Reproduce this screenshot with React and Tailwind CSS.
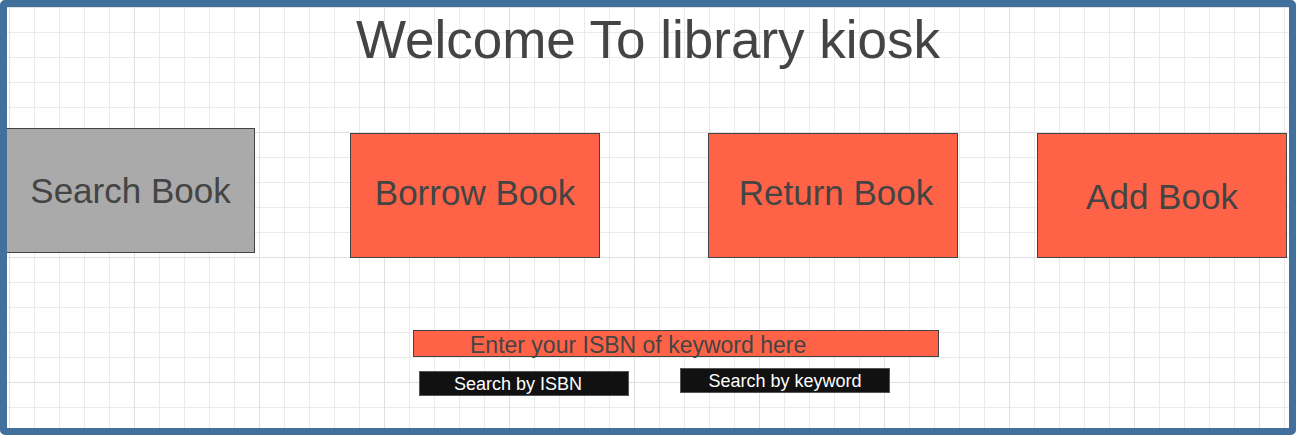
const tiles = [
  { label: 'Borrow Book', cls: 'ml-[95px] mt-[5px] pb-[6px]' },
  { label: 'Return Book', cls: 'ml-[108px] mt-[5px] pb-[7px] pl-[6px]' },
  { label: 'Add Book', cls: 'ml-[79px] mt-[5px] pt-[2px]' },
]

export default function App() {
  return (
    <div className="w-[1296px] h-[435px] bg-white font-['Liberation_Sans',Arial,sans-serif] text-[#444]">
      <div className="w-full h-full flex flex-col border-[7px] border-[#41709c] rounded-[5px] bg-white bg-[linear-gradient(to_right,#e0e0e0_1px,transparent_1px),linear-gradient(to_bottom,#e0e0e0_1px,transparent_1px),linear-gradient(to_right,#eaeaea_1px,transparent_1px),linear-gradient(to_bottom,#eaeaea_1px,transparent_1px)] bg-size-[125px_125px,125px_125px,25px_25px,25px_25px] bg-position-[2px_0,2px_0,2px_0,2px_0]">
        <h1 className="mt-[6px] text-center text-[53px] leading-[53px] font-normal">
          Welcome To library kiosk
        </h1>

        <div className="flex items-start mt-[62px]">
          <button className="w-[248px] h-[125px] flex items-center justify-center bg-[#aaaaaa] border border-[#444] border-l-0 text-[35px] leading-none">
            Search Book
          </button>
          {tiles.map((t) => (
            <button
              key={t.label}
              className={`w-[250px] h-[125px] flex items-center justify-center bg-[#ff6347] border border-[#444] text-[35px] leading-none ${t.cls}`}
            >
              {t.label}
            </button>
          ))}
        </div>

        <div className="ml-[406px] mt-[72px] w-[526px] h-[27px] bg-[#ff6347] border border-[#444] pl-[56px] pt-[2px] text-[23px] leading-[25px]">
          Enter your ISBN of keyword here
        </div>

        <div className="flex items-start ml-[412px] mt-[11px]">
          <button className="mt-[3px] w-[210px] h-[25px] flex items-center justify-center pr-[12px] bg-[#111] border border-[#555] text-white text-[18px] leading-none">
            Search by ISBN
          </button>
          <button className="ml-[51px] w-[210px] h-[25px] flex items-center justify-center bg-[#111] border border-[#555] text-white text-[18px] leading-none">
            Search by keyword
          </button>
        </div>
      </div>
    </div>
  )
}
